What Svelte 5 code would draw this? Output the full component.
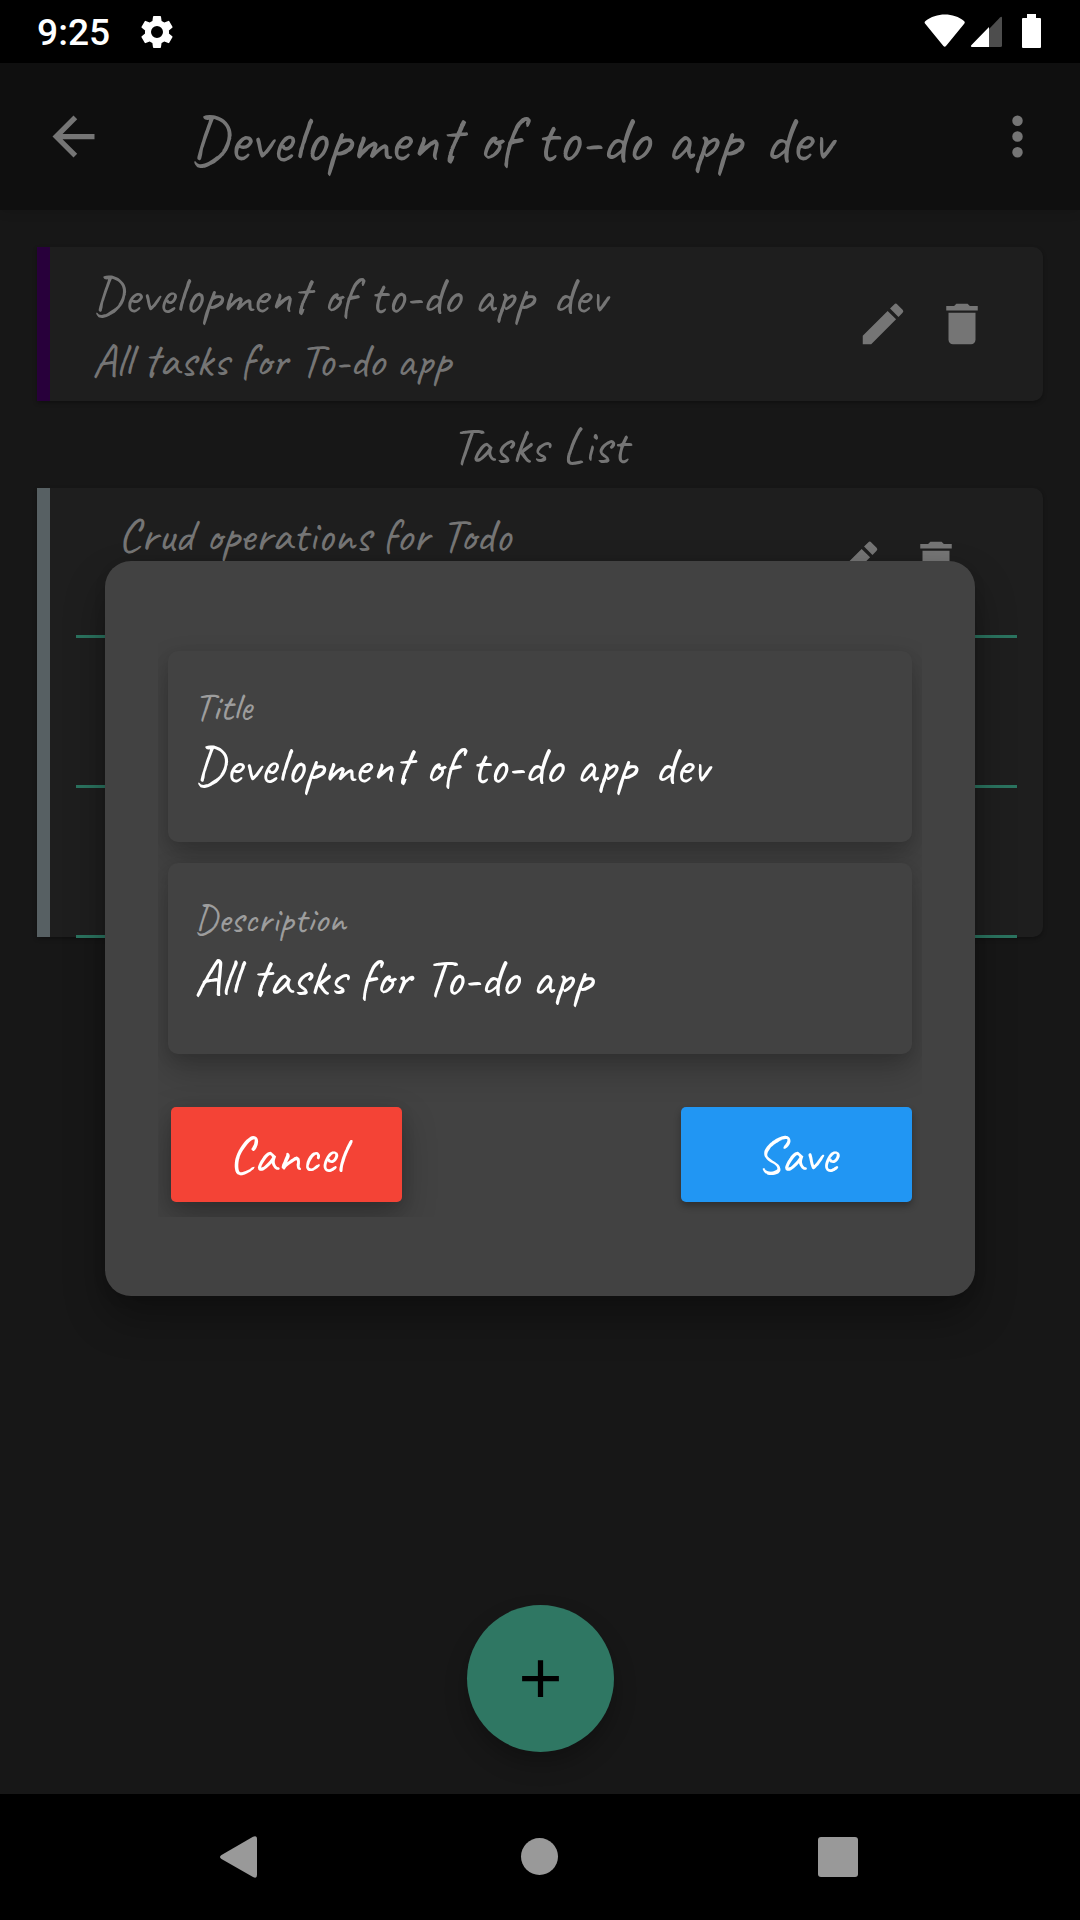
<script>
  const fields = [
    { label: 'Title', value: 'Development of to-do app', suffix: 'dev' },
    { label: 'Description', value: 'All tasks for To-do app' }
  ];
</script>

{#snippet actions()}
  <div class="actions">
    <svg viewBox="0 0 24 24" width="54" height="54"><path d="M3 17.25V21h3.75L17.81 9.94l-3.75-3.75L3 17.25zM20.71 7.04a1 1 0 0 0 0-1.41l-2.34-2.34a1 1 0 0 0-1.41 0l-1.83 1.83 3.75 3.75 1.83-1.83z" /></svg>
    <svg viewBox="0 0 24 24" width="54" height="54"><path d="M6 19c0 1.1.9 2 2 2h8c1.1 0 2-.9 2-2V7H6v12zM19 4h-3.5l-1-1h-5l-1 1H5v2h14V4z" /></svg>
  </div>
{/snippet}

<div class="screen">
  <div class="status">
    <span class="time">9:25</span>
    <svg class="gear" viewBox="0 0 24 24" width="40" height="40"><path fill="#fff" d="M19.14 12.94c.04-.3.06-.61.06-.94 0-.32-.02-.64-.07-.94l2.03-1.58a.49.49 0 0 0 .12-.61l-1.92-3.32a.49.49 0 0 0-.59-.22l-2.39.96a7 7 0 0 0-1.62-.94l-.36-2.54a.48.48 0 0 0-.48-.41h-3.84a.48.48 0 0 0-.47.41l-.36 2.54c-.59.24-1.13.57-1.62.94l-2.39-.96a.49.49 0 0 0-.59.22L2.73 8.87a.48.48 0 0 0 .12.61l2.03 1.58c-.05.3-.09.63-.09.94s.02.64.07.94l-2.03 1.58a.49.49 0 0 0-.12.61l1.92 3.32c.12.22.37.29.59.22l2.39-.96c.5.38 1.03.7 1.62.94l.36 2.54c.05.24.24.41.48.41h3.84c.24 0 .44-.17.47-.41l.36-2.54c.59-.24 1.13-.56 1.62-.94l2.39.96c.22.08.47 0 .59-.22l1.92-3.32a.48.48 0 0 0-.12-.61l-2.01-1.58zM12 15.6A3.6 3.6 0 1 1 12 8.4a3.6 3.6 0 0 1 0 7.2z" /></svg>
    <svg class="signals" viewBox="0 0 120 36" width="120" height="36">
      <path fill="#fff" d="M1 9.500Q0 8 1.500 7C12-1.700 30-1.700 40 7Q41.300 8 40.400 9.500L22 32Q20.700 33.500 19.400 32Z" />
      <path fill="#4d4d4d" d="M65 15L76 3.500Q78 2 78 4V31.500Q78 33 76.500 33H65Z" />
      <path fill="#fff" d="M65 13V33H48Q46 32.500 47.500 31Z" />
      <path fill="#fff" d="M103 0h9v4h4q1 0 1 1v28q0 1-1 1H99q-1 0-1-1V5q0-1 1-1h4z" />
    </svg>
  </div>

  <header class="appbar">
    <svg viewBox="0 0 24 24" width="63" height="63"><path d="M20 11H7.830l5.590-5.590L12 4l-8 8 8 8 1.410-1.410L7.830 13H20v-2z" /></svg>
    <h1>Development of to-do app <span class="suffix">dev</span></h1>
    <svg viewBox="0 0 24 24" width="63" height="63"><path d="M12 8a2 2 0 1 0 0-4 2 2 0 0 0 0 4zm0 2a2 2 0 1 0 0 4 2 2 0 0 0 0-4zm0 6a2 2 0 1 0 0 4 2 2 0 0 0 0-4z" /></svg>
  </header>

  <main class="content">
    <section class="card project">
      <div class="summary">
        <div class="large">Development of to-do app <span class="suffix">dev</span></div>
        <div class="medium">All tasks for To-do app</div>
      </div>
      {@render actions()}
    </section>
    <h2 class="large">Tasks List</h2>
    <section class="card tasks">
      <div class="tile first">
        <div class="medium">Crud operations for Todo</div>
        {@render actions()}
      </div>
      <div class="tile"></div>
      <div class="tile"></div>
    </section>
    <button class="fab" aria-label="Add task">
      <svg viewBox="0 0 24 24" width="63" height="63"><path d="M19 13h-6v6h-2v-6H5v-2h6V5h2v6h6v2z" /></svg>
    </button>
  </main>

  <nav class="navbar">
    <svg viewBox="0 0 40 44" width="40" height="44"><path d="M2.500 20L34 1.700Q38 0 38 4V40Q38 44 34 42L2.500 24Q-.5 22 2.500 20Z" /></svg>
    <span class="home"></span>
    <span class="recent"></span>
  </nav>

  <div class="dialog">
    <div class="form">
      {#each fields as f}
        <div class="field">
          <div class="label">{f.label}</div>
          <div class="large">{f.value}{#if f.suffix}{' '}<span class="suffix">{f.suffix}</span>{/if}</div>
        </div>
      {/each}
      <div class="buttons">
        <button class="large cancel">Cancel</button>
        <button class="large save">Save</button>
      </div>
    </div>
  </div>
</div>

<style>
  :global(body) { margin: 0; background: #161616; }
  .screen {
    position: relative;
    display: flex;
    flex-direction: column;
    width: 1080px;
    height: 1920px;
    overflow: hidden;
    background: #171717;
    color: #757575;
    fill: currentColor;
    font-family: Caveat, cursive;
    white-space: nowrap;
  }
  svg { display: block; flex: none; }
  button { border: 0; padding: 0; font-family: inherit; color: inherit; fill: currentColor; }
  h1, h2 { margin: 0; font-weight: 400; }
  h1 { flex: 1; padding: 5px 0 0 84px; font-size: 65.625px; line-height: 83px; }
  .large { font-size: 52.5px; line-height: 66px; }
  .medium { font-size: 47.25px; line-height: 60px; }
  .label { font-size: 39.375px; line-height: 50px; color: #9d9d9d; }
  .suffix { margin-left: .1em; }

  .status {
    display: flex;
    align-items: center;
    box-sizing: border-box;
    height: 63px;
    padding: 0 36px 0 37px;
    background: #000;
    color: #fff;
  }
  .time { width: 100px; font: 500 37.2px/63px Roboto, sans-serif; padding-top: 2px; }
  .signals { margin: 1px 0 0 auto; }

  .appbar {
    z-index: 1;
    display: flex;
    align-items: center;
    box-sizing: border-box;
    height: 147px;
    padding: 0 31px 0 42px;
    background: #0f0f0f;
    box-shadow: 0 2px 10px rgba(0, 0, 0, .12);
  }

  .content { position: relative; flex: 1; display: flex; flex-direction: column; padding: 37px 37px 0; }
  .card {
    box-sizing: border-box;
    border-left: 13px solid #576063;
    border-radius: 0 10px 10px 0;
    background: #1e1e1e;
    box-shadow: 0 2px 4px rgba(0, 0, 0, .3);
  }
  .actions { display: flex; gap: 25px; }
  .project {
    display: flex;
    justify-content: space-between;
    align-items: center;
    height: 154px;
    padding: 0 54px 0 42px;
    border-left-color: #28003b;
  }
  .summary { display: flex; flex-direction: column; gap: 2px; padding-top: 5px; }
  h2 { align-self: center; padding: 12px 1px 9px 0; }
  .tasks { height: 449px; padding: 0 26px; }
  .tile { box-sizing: border-box; height: 150px; border-bottom: 3px solid #2b7460; }
  .first { display: flex; justify-content: space-between; align-items: flex-start; padding: 18px 54px 0 42px; }
  .first .actions { padding-top: 29px; }
  .fab {
    display: grid;
    place-items: center;
    align-self: center;
    width: 147px;
    height: 147px;
    margin: auto 0 42px;
    border-radius: 50%;
    background: #2f7763;
    color: #000;
    box-shadow: 0 12px 22px rgba(0, 0, 0, .25);
  }

  .navbar {
    z-index: 1;
    display: flex;
    align-items: center;
    justify-content: space-between;
    box-sizing: border-box;
    height: 126px;
    padding: 0 222px 0 219px;
    background: #000;
    color: #999;
  }
  .home { width: 37px; height: 37px; margin: -1px 0 0 1px; border-radius: 50%; background: #999; }
  .recent { width: 40px; height: 40px; border-radius: 3px; background: #999; }

  .dialog {
    position: absolute;
    z-index: 2;
    top: 561px;
    left: 105px;
    width: 870px;
    height: 735px;
    border-radius: 26px;
    background: #424242;
    color: #fff;
    box-shadow: 0 22px 42px rgba(0, 0, 0, .32), 0 4px 12px rgba(0, 0, 0, .1);
  }
  .form {
    display: flex;
    flex-direction: column;
    gap: 21px;
    margin: 0 53px;
    padding: 90px 10px 15px;
    overflow: hidden;
  }
  .field {
    display: flex;
    flex-direction: column;
    gap: 1px;
    box-sizing: border-box;
    height: 191px;
    padding: 31px 26px 0;
    border-radius: 10px;
    background: #424242;
    box-shadow: 0 16px 32px rgba(0, 0, 0, .22), 0 5px 14px rgba(0, 0, 0, .1);
  }
  .buttons { display: flex; justify-content: space-between; padding: 32px 0 0 3px; }
  .buttons button { box-sizing: border-box; width: 231px; height: 95px; border-radius: 5px; }
  .cancel { background: #f44336; box-shadow: 0 14px 34px rgba(0, 0, 0, .26), 0 4px 14px rgba(0, 0, 0, .12); }
  .save { background: #2196f3; box-shadow: 0 4px 7px rgba(0, 0, 0, .3); }
</style>
